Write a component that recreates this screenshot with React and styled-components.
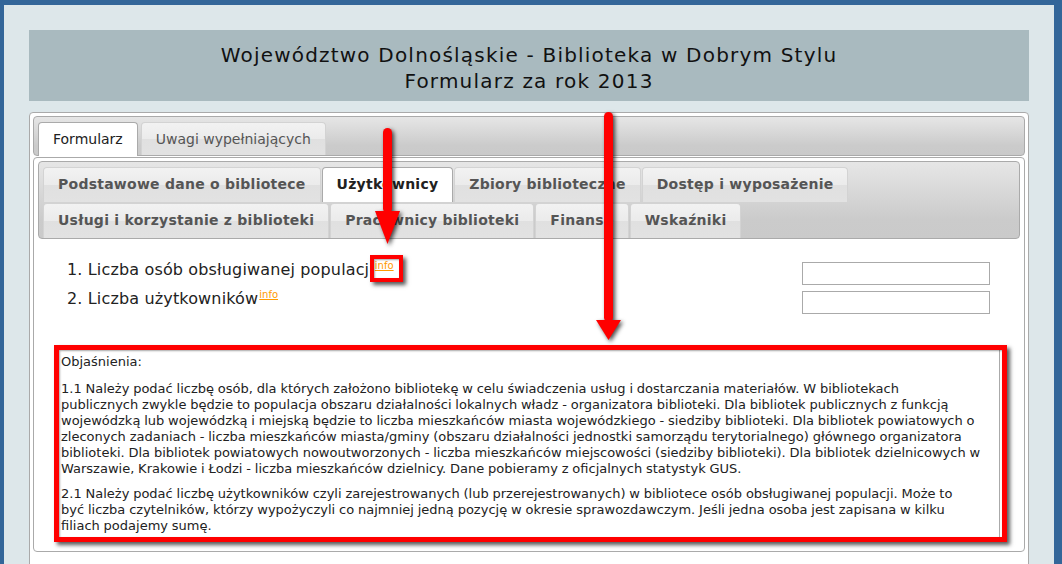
import React from 'react'
import styled, { createGlobalStyle, css } from 'styled-components'

const GlobalStyle = createGlobalStyle`
  html, body {
    margin: 0;
    padding: 0;
    overflow: hidden;
    background: #336699;
  }
  body {
    font-family: "DejaVu Sans", Verdana, sans-serif;
  }
`

const Scene = styled.div`
  position: relative;
  width: 1062px;
  height: 564px;
  overflow: hidden;
`

const Page = styled.div`
  margin: 5px 0 0 4px;
  width: 1050px;
  min-height: 620px;
  box-sizing: border-box;
  padding: 25px 25px 0;
  background: #dde7ea;
`

const Header = styled.div`
  background: #a9babf;
  color: #111;
  text-align: center;
  font-size: 20px;
  letter-spacing: 1.2px;
  line-height: 26px;
  padding: 12px 0 7px;
`

const Widget = styled.div`
  margin-top: 11px;
  border: 1px solid #aaaaaa;
  border-radius: 4px;
  background: #fff;
  padding: 3px;
`

const TabNav = styled.div`
  display: flex;
  flex-wrap: wrap;
  align-items: flex-end;
  padding: 4px 4px 0;
  border: 1px solid #aaaaaa;
  border-radius: 4px;
  background: linear-gradient(to bottom, #e6e6e6 0%, #d6d6d6 45%, #cbcbcb 75%, #cacaca 100%);
`

const Tab = styled.div`
  margin: 1px ${p => (p.$inner ? '1px' : '3px')} 0 0;
  padding: 7px 14px ${p => (p.$active && !p.$inner ? '8px' : '7px')};
  border: 1px solid #d3d3d3;
  border-bottom: 0;
  border-top-left-radius: 4px;
  border-top-right-radius: 4px;
  background: linear-gradient(to bottom, #f2f2f2 0%, #ebebeb 50%, #e0e0e0 51%, #e2e2e2 100%);
  color: #555555;
  font-size: 14px;
  line-height: 18px;
  white-space: nowrap;
  ${p => p.$inner && css`
    font-weight: bold;
    letter-spacing: 0.25px;
    line-height: 19px;
    padding-bottom: 8px;
  `}
  ${p => p.$active && css`
    background: #fff;
    border-color: #aaaaaa;
    color: #212121;
  `}
  ${p => p.$active && !p.$inner && css`
    margin-bottom: -1px;
  `}
`

const OuterPanel = styled.div`
  padding: 1px 0 16px;
`

const InnerWidget = styled.div`
  border: 1px solid #aaaaaa;
  border-radius: 4px;
  padding: 3px 4px;
`

const Panel = styled.div`
  padding: 21px 20px 7px 19px;
  color: #222;
`

const Fields = styled.div`
  padding: 0 10px;
`

const FieldRow = styled.div`
  display: flex;
  justify-content: space-between;
  align-items: flex-start;
  height: 29px;
`

const Label = styled.div`
  font-size: 16px;
  letter-spacing: 0.15px;
  line-height: 20px;
  color: #222;
`

const Info = styled.a`
  font-size: 10px;
  letter-spacing: 0;
  line-height: 0;
  vertical-align: 6px;
  color: #ff9900;
  text-decoration: underline;
  margin-left: 1px;
`

const Input = styled.input`
  box-sizing: border-box;
  width: 188px;
  height: 23px;
  margin: 2px 0 0;
  border: 1px solid #aaaaaa;
  background: #fff;
  padding: 2px 4px;
`

const Notes = styled.div`
  margin-top: 27px;
  border: 1px solid #aaaaaa;
  padding: 8px 3px 6px;
  font-size: 13px;
  line-height: 16px;
  word-spacing: -0.3px;
  color: #222;
  white-space: nowrap;
`

const NoteTitle = styled.p`
  margin: 0 0 11px;
`

const NotePara = styled.p`
  margin: 0 0 ${p => p.$gap || 0}px;
`

const Highlight = styled.div`
  position: absolute;
  left: ${p => p.$x}px;
  top: ${p => p.$y}px;
  width: ${p => p.$w}px;
  height: ${p => p.$h}px;
  box-sizing: border-box;
  border: ${p => p.$bw}px solid #ff0000;
  box-shadow: 3px 3px 4px rgba(0, 0, 0, 0.65), inset 1px 1px 2px rgba(0, 0, 0, 0.35);
  pointer-events: none;
`

const ArrowSvg = styled.svg`
  position: absolute;
  left: ${p => p.$x}px;
  top: ${p => p.$y}px;
  overflow: visible;
  filter: drop-shadow(2px 2px 2px rgba(0, 0, 0, 0.7));
  pointer-events: none;
`

const Arrow = ({ cx, top, headY, tip, shaft = 9, head = 25 }) => {
  const hw = head / 2
  const w = head
  const h = tip - top
  const sx = hw - shaft / 2
  return (
    <ArrowSvg $x={cx - hw} $y={top} width={w} height={h} viewBox={`0 0 ${w} ${h}`}>
      <rect x={sx} y={0} width={shaft} height={headY - top + 2} rx={shaft / 2} fill="#ff0000" />
      <polygon points={`0,${headY - top} ${w},${headY - top} ${hw},${h}`} fill="#ff0000" />
    </ArrowSvg>
  )
}

const outerTabs = ['Formularz', 'Uwagi wypełniających']

const innerTabs = [
  'Podstawowe dane o bibliotece',
  'Użytkownicy',
  'Zbiory biblioteczne',
  'Dostęp i wyposażenie',
  'Usługi i korzystanie z biblioteki',
  'Pracownicy biblioteki',
  'Finanse',
  'Wskaźniki',
]

const fields = ['1. Liczba osób obsługiwanej populacji', '2. Liczba użytkowników']

const para1 = [
  '1.1 Należy podać liczbę osób, dla których założono bibliotekę w celu świadczenia usług i dostarczania materiałów. W bibliotekach',
  'publicznych zwykle będzie to populacja obszaru działalności lokalnych władz - organizatora biblioteki. Dla bibliotek publicznych z funkcją',
  'wojewódzką lub wojewódzką i miejską będzie to liczba mieszkańców miasta wojewódzkiego - siedziby biblioteki. Dla bibliotek powiatowych o',
  'zleconych zadaniach - liczba mieszkańców miasta/gminy (obszaru działalności jednostki samorządu terytorialnego) głównego organizatora',
  'biblioteki. Dla bibliotek powiatowych nowoutworzonych - liczba mieszkańców miejscowości (siedziby biblioteki). Dla bibliotek dzielnicowych w',
  'Warszawie, Krakowie i Łodzi - liczba mieszkańców dzielnicy. Dane pobieramy z oficjalnych statystyk GUS.',
]

const para2 = [
  '2.1 Należy podać liczbę użytkowników czyli zarejestrowanych (lub przerejestrowanych) w bibliotece osób obsługiwanej populacji. Może to',
  'być liczba czytelników, którzy wypożyczyli co najmniej jedną pozycję w okresie sprawozdawczym. Jeśli jedna osoba jest zapisana w kilku',
  'filiach podajemy sumę.',
]

const Lines = ({ lines }) =>
  lines.map((l, i) => (
    <React.Fragment key={i}>
      {l}
      {i < lines.length - 1 && <br />}
    </React.Fragment>
  ))

export default function App() {
  return (
    <Scene>
      <GlobalStyle />
      <Page>
        <Header>
          Województwo Dolnośląskie - Biblioteka w Dobrym Stylu
          <br />
          Formularz za rok 2013
        </Header>
        <Widget>
          <TabNav>
            {outerTabs.map((t, i) => (
              <Tab key={t} $active={i === 0}>{t}</Tab>
            ))}
          </TabNav>
          <OuterPanel>
            <InnerWidget>
              <TabNav>
                {innerTabs.map((t, i) => (
                  <Tab key={t} $inner $active={i === 1}>{t}</Tab>
                ))}
              </TabNav>
              <Panel>
                <Fields>
                  {fields.map(f => (
                    <FieldRow key={f}>
                      <Label>
                        {f}
                        <Info href="#">info</Info>
                      </Label>
                      <Input type="text" />
                    </FieldRow>
                  ))}
                </Fields>
                <Notes>
                  <NoteTitle>Objaśnienia:</NoteTitle>
                  <NotePara $gap={9}><Lines lines={para1} /></NotePara>
                  <NotePara><Lines lines={para2} /></NotePara>
                </Notes>
              </Panel>
            </InnerWidget>
          </OuterPanel>
        </Widget>
      </Page>

      <Arrow cx={387} top={128} headY={211} tip={244} />
      <Arrow cx={608} top={112} headY={320} tip={340} />
      <Highlight $x={370} $y={255} $w={33} $h={27} $bw={4} />
      <Highlight $x={54} $y={345} $w={953} $h={197} $bw={5} />
    </Scene>
  )
}
